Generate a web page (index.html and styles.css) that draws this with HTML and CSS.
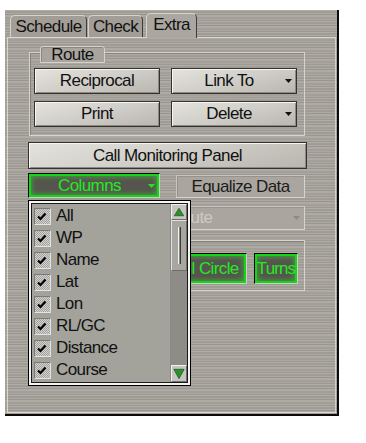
FILE: index.html
```html
<!DOCTYPE html>
<html lang="en">

<head>
    <meta charset="UTF-8">
    <meta name="viewport" content="width=device-width, initial-scale=1.0">
    <title>Route Extra</title>
    <link rel="stylesheet" href="styles.css">
</head>

<body>

    <div class="window">
        <div class="tabs">
            <div class="tab tab-schedule">Schedule</div>
            <div class="tab tab-check">Check</div>
            <div class="tab tab-extra active">Extra</div>
        </div>

        <div class="panel">
            <div class="group route">
                <div class="group-title">Route</div>
                <div class="btn-grid">
                    <button class="btn">Reciprocal</button>
                    <button class="btn btn-drop"><span class="label">Link To</span>
                        <svg class="caret" width="7" height="4" viewBox="0 0 7 4"><polygon points="0,0 7,0 3.5,4" fill="#111"/></svg>
                    </button>
                    <button class="btn">Print</button>
                    <button class="btn btn-drop"><span class="label">Delete</span>
                        <svg class="caret" width="7" height="4" viewBox="0 0 7 4"><polygon points="0,0 7,0 3.5,4" fill="#111"/></svg>
                    </button>
                </div>
            </div>

            <button class="btn btn-wide">Call Monitoring Panel</button>

            <div class="row">
                <div class="combo">
                    <button class="btn-green btn-columns"><span class="label">Columns</span>
                        <svg class="caret" width="7" height="4" viewBox="0 0 7 4"><polygon points="0,0 7,0 3.5,4" fill="#22e622"/></svg>
                    </button>

                    <!-- open list of the Columns combo -->
                    <div class="dropdown">
                        <div class="list">
                            <div class="items">
                                <div class="item"><span class="check"><svg width="15" height="15" viewBox="0 0 15 15"><polyline points="3,7.5 5.5,10 10.5,4.5" fill="none" stroke="#000" stroke-width="2.2"/></svg></span>All</div>
                                <div class="item"><span class="check"><svg width="15" height="15" viewBox="0 0 15 15"><polyline points="3,7.5 5.5,10 10.5,4.5" fill="none" stroke="#000" stroke-width="2.2"/></svg></span>WP</div>
                                <div class="item"><span class="check"><svg width="15" height="15" viewBox="0 0 15 15"><polyline points="3,7.5 5.5,10 10.5,4.5" fill="none" stroke="#000" stroke-width="2.2"/></svg></span>Name</div>
                                <div class="item"><span class="check"><svg width="15" height="15" viewBox="0 0 15 15"><polyline points="3,7.5 5.5,10 10.5,4.5" fill="none" stroke="#000" stroke-width="2.2"/></svg></span>Lat</div>
                                <div class="item"><span class="check"><svg width="15" height="15" viewBox="0 0 15 15"><polyline points="3,7.5 5.5,10 10.5,4.5" fill="none" stroke="#000" stroke-width="2.2"/></svg></span>Lon</div>
                                <div class="item"><span class="check"><svg width="15" height="15" viewBox="0 0 15 15"><polyline points="3,7.5 5.5,10 10.5,4.5" fill="none" stroke="#000" stroke-width="2.2"/></svg></span>RL/GC</div>
                                <div class="item"><span class="check"><svg width="15" height="15" viewBox="0 0 15 15"><polyline points="3,7.5 5.5,10 10.5,4.5" fill="none" stroke="#000" stroke-width="2.2"/></svg></span>Distance</div>
                                <div class="item"><span class="check"><svg width="15" height="15" viewBox="0 0 15 15"><polyline points="3,7.5 5.5,10 10.5,4.5" fill="none" stroke="#000" stroke-width="2.2"/></svg></span>Course</div>
                            </div>
                            <div class="scrollbar">
                                <div class="sb-btn sb-up"><svg width="15" height="14" viewBox="0 0 15 14"><polygon points="7.5,3 12.5,11 2.5,11" fill="#2f8f2f" stroke="#1c5a1c" stroke-width="0.8"/></svg></div>
                                <div class="sb-thumb"><span class="grip"></span></div>
                                <div class="sb-track"></div>
                                <div class="sb-btn sb-down"><svg width="15" height="15" viewBox="0 0 15 15"><polygon points="2,3 13,3 7.5,13" fill="#2f8f2f" stroke="#1c5a1c" stroke-width="0.8"/></svg></div>
                            </div>
                        </div>
                    </div>
                </div>
                <button class="btn-flat btn-equalize">Equalize Data</button>
            </div>

            <div class="btn-flat select-off"><span class="label">Route</span>
                <svg class="caret" width="7" height="4" viewBox="0 0 7 4"><polygon points="0,0 7,0 3.5,4" fill="#8c8a84"/></svg>
            </div>

            <div class="group calc">
                <button class="btn-green btn-circle">Small Circle</button>
                <button class="btn-green btn-turns">Turns</button>
            </div>
        </div>
    </div>

</body>

</html>
```

FILE: styles.css
```css
* {
    margin: 0;
    padding: 0;
    box-sizing: border-box;
}

body {
    background-color: #fff;
    font-family: "Liberation Sans", Arial, sans-serif;
    font-size: 17px;
    letter-spacing: -0.6px;
    color: #111;
}

button {
    font: inherit;
    letter-spacing: inherit;
    color: inherit;
    background: none;
    border: none;
}

/* brushed metal window */
.window {
    width: 334px;
    height: 406px;
    margin: 10px 0 0 5px;
    background-color: #a8a49d;
    background-image: repeating-linear-gradient(180deg,
            rgba(255, 255, 255, .09) 0 1px,
            rgba(0, 0, 0, .05) 1px 3px,
            rgba(255, 255, 255, .06) 3px 4px,
            rgba(0, 0, 0, .09) 4px 5px,
            rgba(255, 255, 255, .07) 5px 7px,
            rgba(0, 0, 0, .03) 7px 9px,
            rgba(255, 255, 255, .04) 9px 10px,
            rgba(0, 0, 0, .07) 10px 11px);
    border-right: 2px solid #0c0c0c;
    border-bottom: 2px solid #0c0c0c;
}

.tabs {
    height: 27px;
    padding-left: 5px;
    display: flex;
    align-items: flex-end;
}

.tab {
    height: 22px;
    display: flex;
    align-items: center;
    justify-content: center;
    border: 1px solid #5a5751;
    border-color: #d6d3cd #3e3c38 transparent #d6d3cd;
    border-bottom: none;
    border-radius: 5px 5px 0 0;
    background-color: #a29e97;
    padding-top: 1px;
}

.tab-schedule {
    width: 77px;
    margin-right: 1px;
}

.tab-check {
    width: 55px;
    margin-right: 3px;
}

.tab-extra {
    width: 51px;
}

.tab.active {
    position: relative;
    height: 25px;
    margin-bottom: -1px;
    background-color: #aba7a0;
    padding-top: 0;
    padding-bottom: 2px;
}

.panel {
    width: 329px;
    height: 376px;
    margin-left: 2px;
    border: 1px solid #dad7d1;
    border-right-color: #d2cfc9;
    padding-left: 20px;
}

/* groups */
.group {
    width: 276px;
    margin-left: 1px;
    border: 1px solid #d6d3cd;
    box-shadow: inset 1px 1px 0 #85827b;
}

.route {
    margin-top: 14px;
    padding: 0 5px 8px 4px;
}

.group-title {
    width: 65px;
    height: 17px;
    margin: -7px 0 0 6px;
    display: flex;
    align-items: center;
    justify-content: center;
    background-color: #a9a59e;
    border: 1px solid #d6d3cd;
    border-radius: 3px 3px 0 0;
    box-shadow: inset 1px 1px 0 #8a877f;
}

.btn-grid {
    margin-top: 5px;
    display: grid;
    grid-template-columns: 126px 126px;
    column-gap: 11px;
    row-gap: 7px;
}

/* raised grey buttons */
.btn {
    height: 26px;
    display: flex;
    align-items: center;
    justify-content: center;
    border: 1px solid #34322f;
    background: linear-gradient(165deg, #e4e2dd 0%, #d2d0ca 45%, #b9b6af 100%);
    box-shadow: inset 1px 1px 0 #f6f5f2, inset -1px -1px 0 #8c8982;
}

.btn-drop {
    padding: 0 4px 0 1px;
}

.btn-drop .label,
.btn-columns .label,
.select-off .label {
    flex: 1;
    text-align: center;
}

.btn-wide {
    width: 279px;
    height: 27px;
    margin-top: 6px;
}

.row {
    margin-top: 4px;
    display: flex;
    align-items: flex-start;
    gap: 16px;
}

.combo {
    position: relative;
}

/* green highlighted buttons */
.btn-green {
    display: flex;
    align-items: center;
    justify-content: center;
    color: #22ea22;
    background-color: #56544e;
    border: 1px solid #000;
    border-right-color: #cfcdc8;
    border-bottom-color: #cfcdc8;
    box-shadow: inset 0 0 0 2px #17d417, inset 0 0 5px 3px rgba(40, 230, 40, .55);
}

.btn-columns {
    width: 132px;
    height: 25px;
    padding: 0 4px 0 2px;
}

/* flat buttons */
.btn-flat {
    display: flex;
    align-items: center;
    justify-content: center;
    border: 1px solid #c9c6c0;
    border-right-color: #d6d3cd;
    border-bottom-color: #d6d3cd;
    box-shadow: inset 1px 1px 0 #97938c;
    background-color: #aaa69f;
}

.btn-equalize {
    width: 129px;
    height: 23px;
    margin-top: 2px;
    color: #1c1c1c;
}

.select-off {
    width: 277px;
    height: 24px;
    margin-top: 8px;
    color: #cdcac4;
    padding: 0 4px 0 0;
}

.select-off .label {
    text-align: left;
    padding-left: 141px;
}

.calc {
    height: 51px;
    margin-top: 10px;
    padding: 12px 6px 0 0;
    display: flex;
    justify-content: flex-end;
    gap: 7px;
}

.btn-circle {
    width: 100px;
    height: 31px;
}

.btn-turns {
    width: 44px;
    height: 31px;
    letter-spacing: -0.9px;
}

/* dropdown list */
.dropdown {
    position: absolute;
    left: 0;
    top: 27px;
    width: 163px;
    height: 186px;
    border: 1px solid #000;
    background-color: #f4f4f2;
    padding: 2px;
    z-index: 5;
}

.list {
    height: 100%;
    display: flex;
    border: 1px solid #1a1a1a;
    background-color: #a3a29b;
}

.items {
    flex: 1;
    padding: 1px 0 0 2px;
}

.item {
    height: 22px;
    display: flex;
    align-items: center;
    gap: 5px;
}

.check {
    width: 17px;
    height: 17px;
    display: flex;
    align-items: center;
    justify-content: center;
    border: 1px solid #7b7a76;
    border-right-color: #e4e4e2;
    border-bottom-color: #e4e4e2;
    background: repeating-conic-gradient(#d2d2d0 0 25%, #a2a19d 0 50%) 0 0 / 2px 2px;
}

.scrollbar {
    width: 17px;
    display: flex;
    flex-direction: column;
    border-left: 1px solid #8a8983;
}

.sb-btn {
    display: flex;
    align-items: center;
    justify-content: center;
    background-color: #c6c4be;
    border: 1px solid #f2f1ee;
    border-right-color: #6f6d68;
    border-bottom-color: #6f6d68;
}

.sb-up {
    height: 16px;
}

.sb-down {
    height: 17px;
}

.sb-thumb {
    height: 51px;
    display: flex;
    justify-content: center;
    padding: 6px 0;
    background-color: #a7a6a0;
    border: 1px solid #e2e1dd;
    border-right-color: #6f6d68;
    border-bottom-color: #6f6d68;
}

.grip {
    width: 3px;
    border-left: 1px solid #f2f1ee;
    border-right: 1px solid #3e3d3a;
    background-color: #8d8c86;
}

.sb-track {
    flex: 1;
    background-color: #8d8c86;
}
```
